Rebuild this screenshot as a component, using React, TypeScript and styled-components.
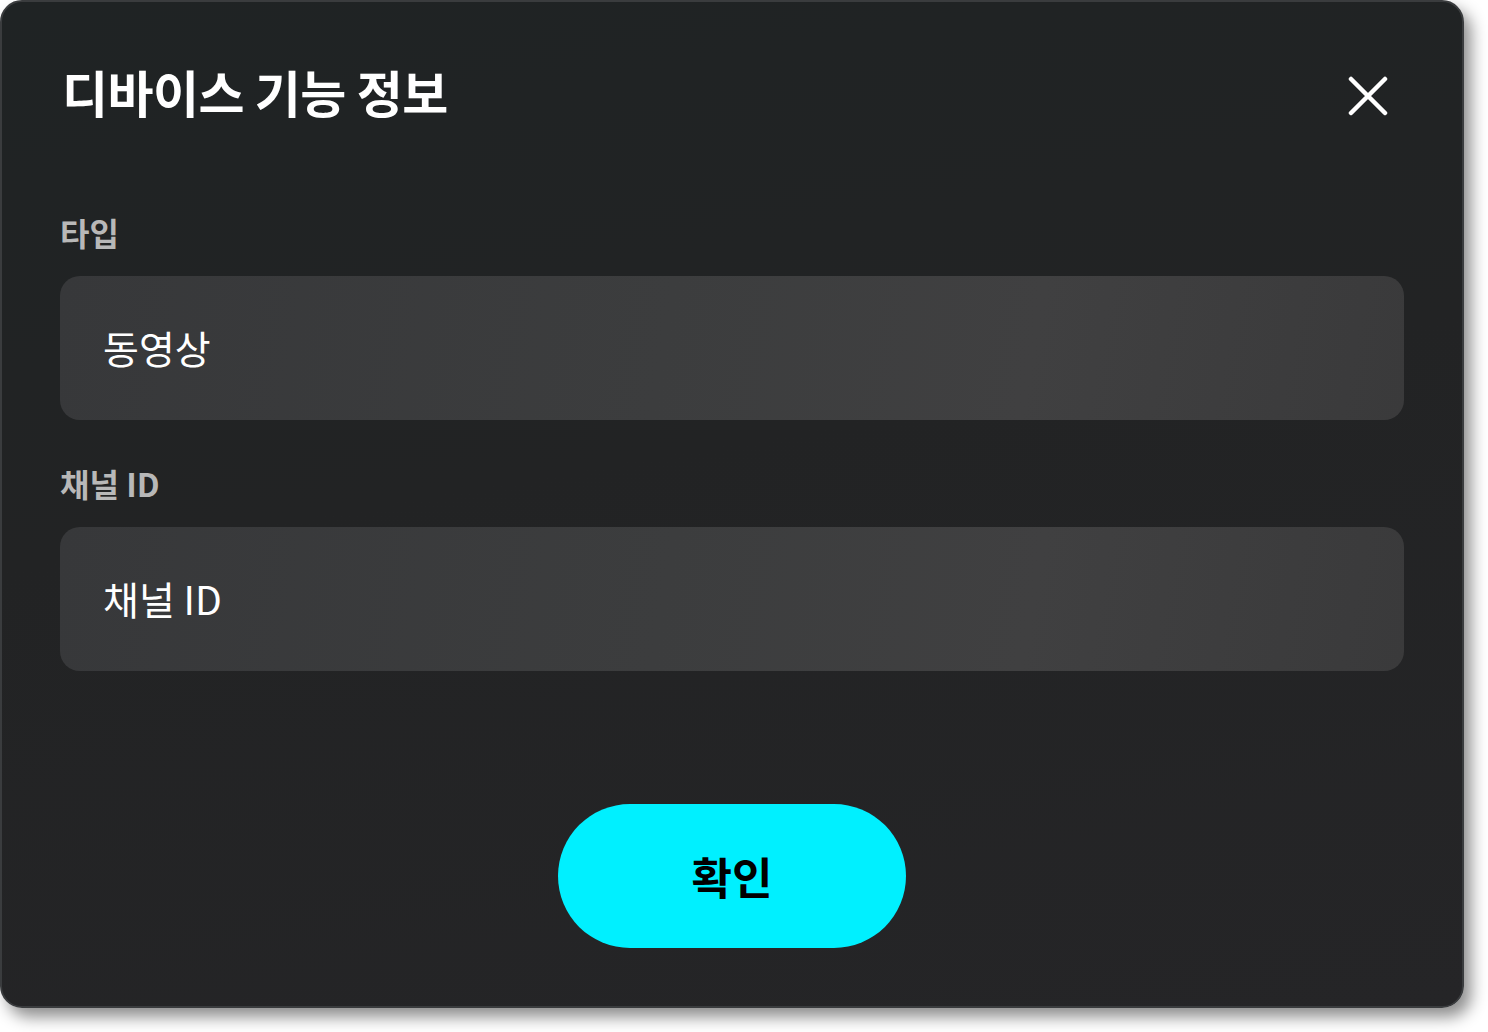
import React from 'react'
import styled, {createGlobalStyle} from 'styled-components'

const GlobalStyle = createGlobalStyle`
    html, body {
        margin: 0;
        padding: 0;
        background: #ffffff;
    }
    body {
        min-height: 100vh;
        font-family: 'Noto Sans CJK KR', 'Noto Sans', sans-serif;
    }
`

const Modal = styled.div`
    box-sizing: border-box;
    width: 1464px;
    height: 1008px;
    display: flex;
    flex-direction: column;
    padding: 59px 58px 58px;
    border: 2px solid #3a3c3e;
    border-radius: 22px;
    background: linear-gradient(170deg, #1f2324 0%, #222324 45%, #252527 100%);
    box-shadow: 7px 9px 16px rgba(0, 0, 0, 0.45);
    color: #ffffff;
`

const Header = styled.div`
    display: flex;
    align-items: center;
    justify-content: space-between;
    height: 60px;
`

const Title = styled.h1`
    margin: 0 0 0 2px;
    font-size: 50px;
    font-weight: 700;
    line-height: 60px;
    letter-spacing: -0.5px;
`

const CloseButton = styled.button`
    display: flex;
    align-items: center;
    justify-content: center;
    width: 48px;
    height: 48px;
    margin: 10px 12px 0 0;
    padding: 0;
    border: none;
    background: transparent;
    cursor: pointer;
`

const Field = styled.div<{gap: number}>`
    display: flex;
    flex-direction: column;
    gap: 24px;
    margin-top: ${(props) => props.gap}px;
`

const Label = styled.label`
    font-size: 32px;
    font-weight: 700;
    line-height: 40px;
    color: #b8b8b8;
`

const Input = styled.div`
    box-sizing: border-box;
    height: 144px;
    display: flex;
    align-items: center;
    padding: 0 43px 2px;
    border-radius: 20px;
    background: linear-gradient(100deg, #37383a 0%, #3c3d3e 45%, #404041 72%, #3a3a3b 100%);
    font-size: 39px;
    font-weight: 400;
    color: #ffffff;
`

const Footer = styled.div`
    display: flex;
    justify-content: center;
    margin-top: auto;
`

const ConfirmButton = styled.button`
    width: 348px;
    height: 144px;
    border: none;
    border-radius: 72px;
    background: #00f0ff;
    color: #000000;
    font-family: inherit;
    font-size: 44px;
    font-weight: 700;
    cursor: pointer;
`

export default function App() {
    return (
        <>
            <GlobalStyle />
            <Modal>
                <Header>
                    <Title>디바이스 기능 정보</Title>
                    <CloseButton aria-label="닫기">
                        <svg width="40" height="40" viewBox="0 0 40 40">
                            <path d="M3 3 L37 37 M37 3 L3 37" stroke="#ffffff" strokeWidth="4.5" strokeLinecap="round" />
                        </svg>
                    </CloseButton>
                </Header>
                <Field gap={91}>
                    <Label>타입</Label>
                    <Input>동영상</Input>
                </Field>
                <Field gap={43}>
                    <Label>채널 ID</Label>
                    <Input>채널 ID</Input>
                </Field>
                <Footer>
                    <ConfirmButton>확인</ConfirmButton>
                </Footer>
            </Modal>
        </>
    )
}
